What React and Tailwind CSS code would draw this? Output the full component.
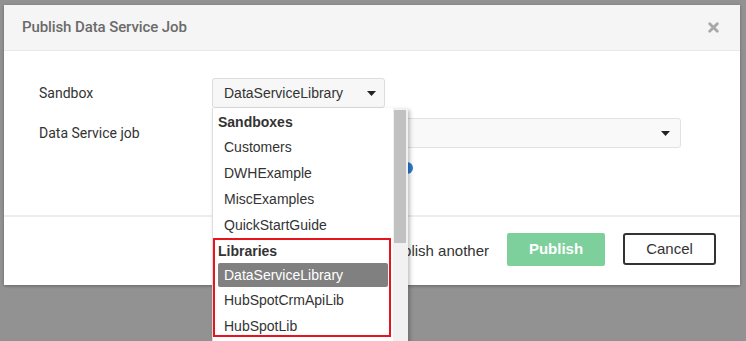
import React from 'react';

const sandboxes = ['Customers', 'DWHExample', 'MiscExamples', 'QuickStartGuide'];
const libraries = ['DataServiceLibrary', 'HubSpotCrmApiLib', 'HubSpotLib'];

const Caret = () => (
  <svg width="9" height="5" viewBox="0 0 9 5" className="fill-[#222]">
    <path d="M0 0h9L4.5 5z" />
  </svg>
);

const SandboxMenu = () => (
  <div className="absolute top-full left-0 z-10 flex w-[196px] h-[240px] bg-white border-l border-[#ddd] shadow-[2px_2px_4px_rgba(0,0,0,0.25)] font-['Liberation_Sans',Arial,sans-serif] text-[14px] text-[#333]">
    <div className="flex-1 pt-[2px]">
      <div className="h-6 flex items-center pl-[5px] font-bold">Sandboxes</div>
      {sandboxes.map((s) => (
        <div key={s} className="h-[26px] flex items-center pl-[11px]">{s}</div>
      ))}
      <div className="h-[25px] flex items-center pl-[5px] pt-[2px] font-bold">Libraries</div>
      {libraries.map((s, i) => (
        <div
          key={s}
          className={
            i === 0
              ? 'h-6 mx-[5px] flex items-center pl-[6px] rounded-[2px] bg-[#808080] text-white'
              : 'h-[26px] flex items-center pl-[11px]'
          }
        >
          {s}
        </div>
      ))}
    </div>
    {/* scrollbar */}
    <div className="w-[15px] bg-[#f1f1f1] pt-[2px] pl-[1px]">
      <div className="w-[12px] h-[133px] bg-[#c1c1c1]" />
    </div>
    {/* annotation box */}
    <div className="absolute left-0 top-[130px] w-[178px] h-[99px] border-2 border-[#e8141c]" />
  </div>
);

export default function App() {
  return (
    <div className="h-[341px] w-[746px] overflow-hidden bg-[#929292] pt-[5px] pl-[4px] font-['Roboto',Arial,sans-serif]">
      <div className="w-[736px] h-[280px] bg-white shadow-[0_1px_3px_rgba(0,0,0,0.3)] flex flex-col">
        {/* header */}
        <div className="h-[46px] shrink-0 bg-[#f5f5f5] border-b border-[#e8e8e8] flex items-center justify-between pl-[18px] pr-[21px]">
          <span className="text-[15px] font-medium text-[#6b6b6b] tracking-[-0.1px]">Publish Data Service Job</span>
          <svg width="11" height="11" viewBox="0 0 11 11" className="stroke-[#a8a8a8]" strokeWidth="2.8" strokeLinecap="round">
            <path d="M1.7 1.7l7.6 7.6M9.3 1.7l-7.6 7.6" />
          </svg>
        </div>

        {/* body */}
        <div className="h-[164px] shrink-0 pl-[35px] pt-[27px] flex flex-col gap-[10px] text-[14px] text-[#333]">
          <div className="flex items-center">
            <div className="w-[173px]">Sandbox</div>
            <div className="relative">
              <div className="w-[173px] h-[30px] bg-[#f7f7f7] border border-[#dcdcdc] rounded-[3px] flex items-center justify-between pl-[11px] pr-[8px] font-['Liberation_Sans',Arial,sans-serif]">
                <span>DataServiceLibrary</span>
                <Caret />
              </div>
              <SandboxMenu />
            </div>
          </div>
          <div className="flex items-center">
            <div className="w-[173px]">Data Service job</div>
            <div className="w-[469px] h-[30px] bg-[#f9f9f9] border border-[#e2e2e2] rounded-[3px] flex items-center justify-end pr-[10px]">
              <Caret />
            </div>
          </div>
          <div className="flex pl-[362px] pt-[4px]">
            <div className="w-[12px] h-[12px] rounded-full bg-[#2b7bd0]" />
          </div>
        </div>

        {/* footer */}
        <div className="flex-1 border-t-2 border-[#eeeeee] flex items-center justify-end pr-[24px] pb-[4px] gap-[18px] font-['Liberation_Sans',Arial,sans-serif] text-[15px]">
          <label className="flex items-center gap-2 text-[#333] pt-[4px]">
            <span className="w-[13px] h-[13px] border border-[#999] rounded-[2px] bg-white" />
            Publish another
          </label>
          <button className="w-[98px] h-[33px] rounded-[2px] bg-[#7dd09b] text-white font-bold">Publish</button>
          <button className="w-[93px] h-[32px] rounded-[3px] border-2 border-[#333] bg-white text-[#333]">Cancel</button>
        </div>
      </div>
    </div>
  );
}
